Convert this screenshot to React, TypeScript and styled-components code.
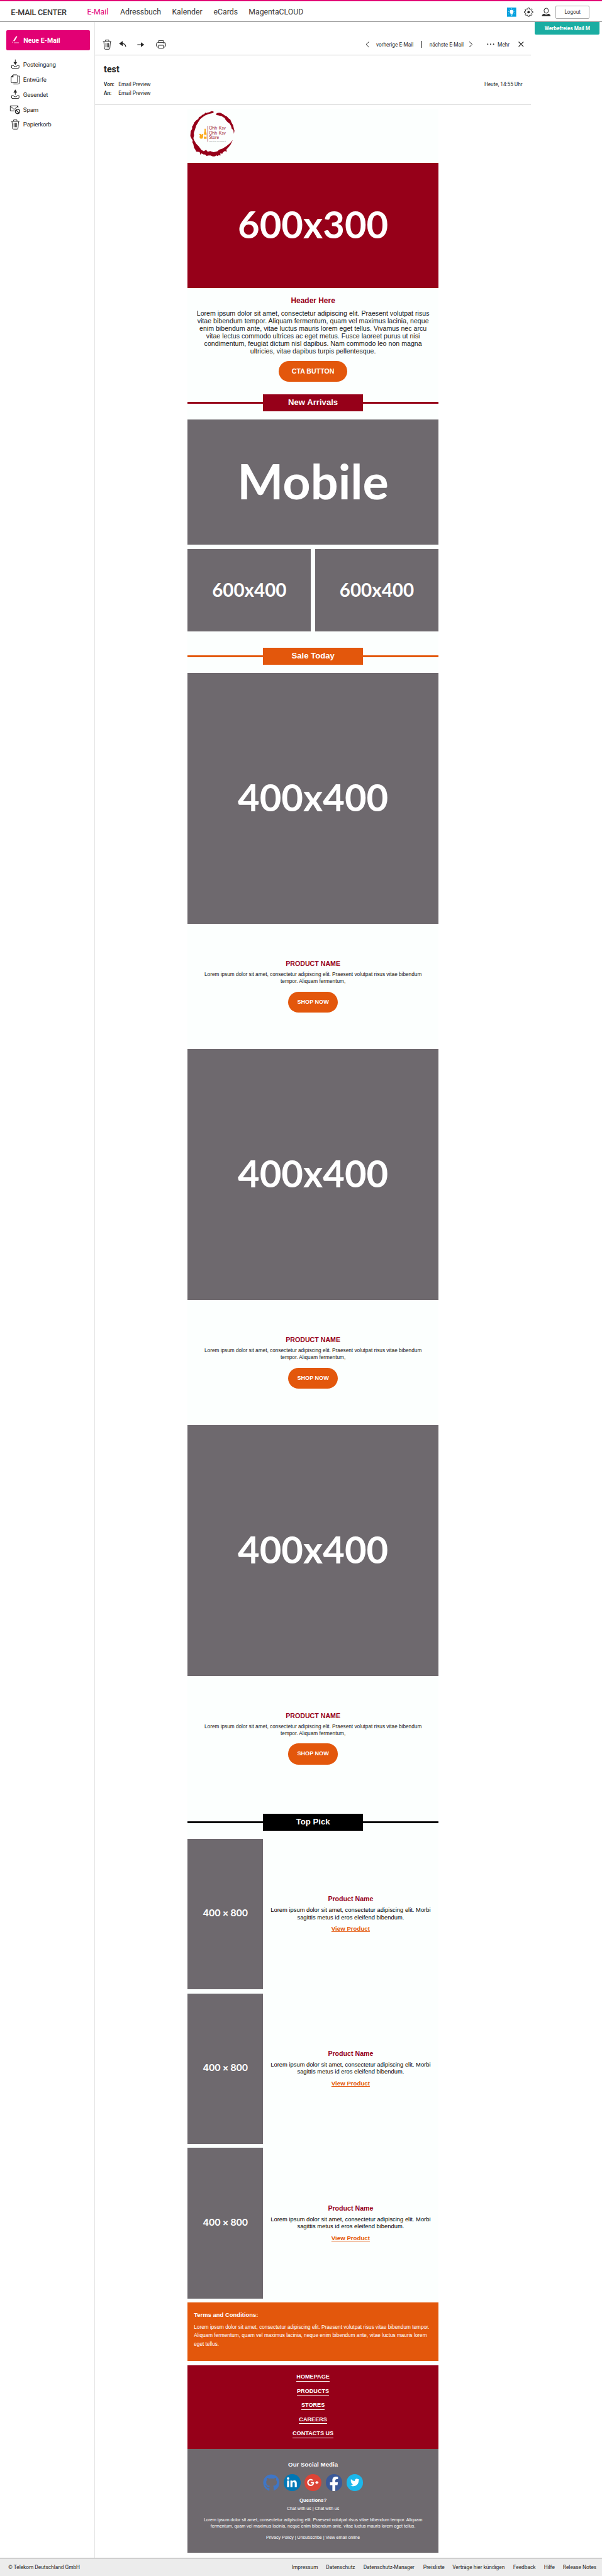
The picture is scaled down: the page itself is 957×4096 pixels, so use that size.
import React from "react";
import styled, { createGlobalStyle } from "styled-components";
import { FaGithub, FaLinkedinIn, FaGooglePlusG, FaFacebookF, FaTwitter } from "react-icons/fa";

/* 1rem = 10 design pixels */
const GlobalStyle = createGlobalStyle`
  *, *::before, *::after { box-sizing: border-box; }
  html { font-size: 6.644px; }
  body { margin: 0; background: #fff; overflow: hidden; }
  svg { display: block; }
`;

const ui = `"Roboto", "Liberation Sans", sans-serif`;
const arial = `"Liberation Sans", Arial, sans-serif`;
const magenta = "#e20074";
const crimson = "#960019";
const orange = "#e3570c";
const slate = "#6e696e";

const Page = styled.div`
  width: 100%;
  height: 616.5rem;
  display: flex;
  flex-direction: column;
  background: #fff;
  color: #262626;
  font-family: ${ui};
  white-space: nowrap;
`;

/* ---------- top bar ---------- */
const TopBar = styled.header`
  height: 5.2rem;
  flex: none;
  display: flex;
  align-items: center;
  border-top: 0.4rem solid ${magenta};
  border-bottom: 0.1rem solid #8c8c8c;
  padding: 0.6rem 3rem 0 2.6rem;
`;
const Brand = styled.div`
  width: 18.25rem;
  font-size: 1.9rem;
  line-height: 2.4rem;
  font-weight: 500;
  letter-spacing: -0.034rem;
  color: #383838;
`;
const Nav = styled.nav`
  display: flex;
  flex: 1;
`;
const NavItem = styled.a<{ $w: number; $active?: boolean }>`
  width: ${(p) => p.$w}rem;
  font-size: 1.85rem;
  line-height: 2.4rem;
  color: ${(p) => (p.$active ? magenta : "#383838")};
`;
const TopIcons = styled.div`
  display: flex;
  align-items: center;
  gap: 2rem;
  margin-right: 1.1rem;
`;
const Logout = styled.button`
  width: 8.1rem;
  height: 3.2rem;
  padding: 0;
  border: 0.1rem solid #a8a8a8;
  border-radius: 0.3rem;
  background: #fff;
  color: #383838;
  font: 400 1.23rem/1.6rem ${ui};
`;

/* ---------- body ---------- */
const Body = styled.div`
  flex: 1;
  min-height: 0;
  display: flex;
`;
const Sidebar = styled.aside`
  width: 22.8rem;
  flex: none;
  border-right: 0.1rem solid #e4e4e4;
  padding: 2rem 1.2rem 0 1.5rem;
`;
const Compose = styled.button`
  width: 20rem;
  height: 4.8rem;
  border: 0;
  border-radius: 0.3rem;
  padding: 0 0 0 1.4rem;
  display: flex;
  align-items: center;
  gap: 1rem;
  background: ${magenta};
  color: #fff;
  font: 700 1.6rem/2rem ${ui};
  margin-bottom: 1.6rem;

  span { padding-top: 0.25rem; }
  svg { margin-bottom: 0.3rem; }
`;
const Folder = styled.a`
  height: 3.6rem;
  display: flex;
  align-items: center;
  padding-left: 1rem;
  gap: 0.85rem;
  font-size: 1.45rem;
  letter-spacing: -0.025rem;
`;

const Reader = styled.main`
  width: 104.2rem;
  flex: none;
`;
const Toolbar = styled.div`
  height: 8rem;
  border-bottom: 0.1rem solid #cccccc;
  display: flex;
  align-items: center;
  padding: 3rem 1.75rem 0 1.7rem;
  font-size: 1.25rem;
  line-height: 1.6rem;
`;
const Tools = styled.div`
  display: flex;
  align-items: center;
  flex: 1;
`;
const Tool = styled.span<{ $w: number }>`
  width: ${(p) => p.$w}rem;
`;
const Pager = styled.div`
  display: flex;
  align-items: center;
`;
const PagerText = styled.span<{ $w: number }>`
  width: ${(p) => p.$w}rem;
  padding-top: 0.1rem;
`;
const Bar = styled.span`
  width: 0.1rem;
  height: 1.7rem;
  background: #262626;
  margin-right: 1.8rem;
`;
const Subject = styled.section`
  height: 12rem;
  border-bottom: 0.1rem solid #d9d9d9;
  padding: 2.35rem 2rem 0 2.05rem;
`;
const Title = styled.h1`
  margin: 0 0 1.35rem;
  font-size: 2.15rem;
  line-height: 2.4rem;
  font-weight: 700;
`;
const Meta = styled.div`
  display: flex;
  font-size: 1.24rem;
  line-height: 2rem;

  b { width: 3.5rem; font-weight: 600; }
  span { flex: 1; }
`;
const Promo = styled.aside`
  flex: 1;
  padding-left: 1rem;
`;
const PromoButton = styled.a`
  display: block;
  width: 15.5rem;
  height: 3.1rem;
  border-radius: 0 0 0.3rem 0.3rem;
  background: #1bada2;
  color: #fff;
  text-align: center;
  font-weight: 700;
  font-size: 1.245rem;
  line-height: 3.2rem;
`;

/* ---------- e-mail ---------- */
const Email = styled.article`
  width: 60rem;
  margin: 0.8rem auto 0;
  background: #fcfffe;
  font-family: ${arial};
  color: #202020;
  text-align: center;
`;
const Placeholder = styled.div<{ $h: number; $size: number; $w?: number; $bg?: string }>`
  width: ${(p) => p.$w ?? 60}rem;
  height: ${(p) => p.$h}rem;
  background: ${(p) => p.$bg ?? slate};
  display: flex;
  align-items: center;
  justify-content: center;
  color: #fff;
  font: 700 ${(p) => p.$size}rem/1.2 "Lato", sans-serif;
  padding-bottom: ${(p) => p.$size * 0.06}rem;
`;
const TallPlaceholder = styled(Placeholder)`
  font: 600 ${(p) => p.$size}rem/1.2 "Inter", sans-serif;
  letter-spacing: -0.08rem;
  padding-bottom: 0;
`;
const Intro = styled.section`
  padding: 2.03rem 0 3rem;
  display: flex;
  flex-direction: column;
  align-items: center;
`;
const IntroTitle = styled.h2`
  margin: 0 0 1.1rem;
  font-size: 1.8rem;
  line-height: 2.1rem;
  color: ${crimson};
`;
const IntroText = styled.p`
  margin: 0 0 1.37rem;
  font-size: 1.6rem;
  line-height: 1.8rem;
`;
const Pill = styled.a<{ $w: number; $size: number }>`
  width: ${(p) => p.$w}rem;
  height: 5rem;
  border-radius: 2.5rem;
  background: ${orange};
  color: #fff;
  font-weight: 700;
  font-size: ${(p) => p.$size}rem;
  line-height: 5rem;
  text-align: center;
`;
const Divider = styled.div<{ $color: string }>`
  display: flex;
  align-items: center;
  margin-bottom: 2rem;
  color: ${(p) => p.$color};

  &::before, &::after {
    content: "";
    flex: 1;
    height: 0.5rem;
    background: currentColor;
  }
`;
const DividerLabel = styled.h3<{ $color: string }>`
  width: 24rem;
  margin: 0;
  background: ${(p) => p.$color};
  color: #fff;
  font-size: 1.98rem;
  line-height: 4rem;
`;
const Pair = styled.div`
  display: flex;
  justify-content: space-between;
  margin: 1rem 0 4rem;
`;
const ProductList = styled.div`
  padding-bottom: 3rem;
`;
const Product = styled.section`
  height: 30rem;
  padding-top: 8.75rem;
  display: flex;
  flex-direction: column;
  align-items: center;
`;
const ProductName = styled.h4`
  margin: 0 0 0.95rem;
  font-size: 1.6rem;
  line-height: 1.8rem;
  color: ${crimson};
`;
const ProductText = styled.p`
  margin: 0 0 1.53rem;
  font-size: 1.243rem;
  line-height: 1.6rem;
`;
const Pick = styled.section`
  display: flex;
  margin-bottom: 1rem;
`;
const PickInfo = styled.div`
  flex: 1;
  display: flex;
  flex-direction: column;
  align-items: center;
  justify-content: center;
`;
const PickText = styled.p`
  margin: 0 0 1rem;
  color: #000;
  font-size: 1.413rem;
  line-height: 1.7rem;
`;
const PickLink = styled.a`
  color: ${orange};
  font-weight: 700;
  font-size: 1.457rem;
  line-height: 1.7rem;
  text-decoration: underline;
`;
const Terms = styled.section`
  height: 14rem;
  margin-bottom: 1rem;
  padding: 2.2rem 1.5rem 0;
  background: ${orange};
  color: #fff;
  text-align: left;
  font-size: 1.241rem;
  line-height: 2rem;

  h5 { margin: 0 0 1.15rem; font-size: 1.425rem; line-height: 1.6rem; }
  p { margin: 0; }
`;
const Links = styled.nav`
  height: 20rem;
  padding-top: 2rem;
  background: ${crimson};
  display: flex;
  flex-direction: column;
  align-items: center;
  gap: 1.5rem;
`;
const LinkItem = styled.a`
  height: 1.9rem;
  border-bottom: 0.2rem solid #fff;
  color: #fff;
  font-weight: 700;
  font-size: 1.375rem;
  line-height: 1.6rem;
`;
const Social = styled.section`
  height: 24.8rem;
  padding-top: 2.86rem;
  background: ${slate};
  color: #fff;
  font-size: 1.064rem;
  line-height: 1.4rem;

  h5 { margin: 0 0 1.44rem; font-size: 1.47rem; line-height: 1.8rem; }
  h6 { margin: 0 0 0.47rem; font-size: 1.19rem; line-height: 1.4rem; }
  p { margin: 0 0 1.4rem; }
`;
const SocialRow = styled.div`
  display: flex;
  justify-content: center;
  gap: 1rem;
  margin-bottom: 1.58rem;
`;
const Disc = styled.a<{ $bg: string; $fg?: string; $size: number; $drop?: number }>`
  width: 4rem;
  height: 4rem;
  border-radius: 50%;
  overflow: hidden;
  background: ${(p) => p.$bg};
  color: ${(p) => p.$fg ?? "#fff"};
  display: flex;
  align-items: center;
  justify-content: center;
  padding-top: ${(p) => p.$drop ?? 0}rem;

  svg { width: ${(p) => p.$size}rem; height: ${(p) => p.$size}rem; flex: none; }
`;

/* ---------- footer ---------- */
const Footer = styled.footer`
  height: 4.3rem;
  flex: none;
  display: flex;
  align-items: center;
  border-top: 0.1rem solid #8c8c8c;
  background: #ececec;
  padding-left: 2rem;
  font-size: 1.25rem;
  line-height: 1.6rem;
`;
const Owner = styled.span`
  width: 67.8rem;
`;
const FooterLink = styled.a<{ $w: number }>`
  width: ${(p) => p.$w}rem;
`;

/* ---------- icons ---------- */
const Svg = styled.svg<{ $w: number; $h: number }>`
  width: ${(p) => p.$w / 10}rem;
  height: ${(p) => p.$h / 10}rem;
  flex: none;
  overflow: visible;
  fill: none;
  stroke: currentColor;
  stroke-width: 1.5;
`;
type IconProps = { w: number; h: number; children: React.ReactNode };
const Icon = ({ w, h, children }: IconProps) => (
  <Svg $w={w} $h={h} viewBox={`0 0 ${w} ${h}`}>{children}</Svg>
);

const Trash = () => (
  <Icon w={22} h={24}>
    <path d="M1 4.5H21M7 4V1H15V4M3.2 5L4.5 21Q4.7 23 6.5 23H15.5Q17.3 23 17.5 21L18.8 5M8 8V18.5M11 8V18.5M14 8V18.5" />
  </Icon>
);
const Tray = ({ up }: { up?: boolean }) => (
  <Icon w={22} h={24}>
    <path d="M2 15.2H6.5Q7.2 18 11 18T15.5 15.2H20V19.5Q20 22 17.5 22H4.5Q2 22 2 19.5Z" />
    <path d={up ? "M11 13V7" : "M11 1V8"} />
    <path d={up ? "M6.5 8L11 0.5L15.5 8Z" : "M6.5 7L11 14L15.5 7Z"} fill="currentColor" stroke="none" />
  </Icon>
);
const Drafts = () => (
  <Icon w={22} h={24}>
    <path d="M6 1.5H14Q16.5 1.5 16.5 4V18Q16.5 20.5 14 20.5H3.5Q1 20.5 1 18V6.5Z" />
    <path d="M1 7L6.5 1V7Z" fill="currentColor" stroke="none" />
    <path d="M18.5 4.5H21V20Q21 23.5 17.5 23.5H6.5" />
  </Icon>
);
const Spam = () => (
  <Icon w={22} h={24}>
    <path d="M9.5 15.5H-1V3.5H17.5V9M-0.8 4L8.2 12L17.3 4" />
    <circle cx="16.5" cy="17" r="5.2" strokeWidth="2" />
    <path d="M13 13.5L20 20.5" strokeWidth="2" />
  </Icon>
);
const Pen = () => (
  <Icon w={17} h={18}>
    <path d="M11.5 1L4.5 12.5" strokeWidth="3" />
    <path d="M3 13.5L1 16.5M5 16.5H16.5" strokeWidth="1.2" />
  </Icon>
);
const Reply = () => (
  <Icon w={18} h={16}>
    <path d="M0.5 6.5L9 0.5V12.5Z" fill="currentColor" stroke="none" />
    <path d="M8 6.5Q15.5 6.5 16.5 14" strokeWidth="1.8" />
  </Icon>
);
const Forward = () => (
  <Icon w={18} h={12}>
    <path d="M0.5 6H10" />
    <path d="M9 0.5L17 6L9 11.5Z" fill="currentColor" stroke="none" />
  </Icon>
);
const Printer = () => (
  <Icon w={24} h={20}>
    <path d="M6 5V1H18V5M5.5 16.5H4L1 14V8.5Q1 5.5 4 5.5H20Q23 5.5 23 8.5V14L20 16.5H18.5M6.2 12H17.8V19.3H6.2Z" />
    <path d="M18.5 8.5H20" />
  </Icon>
);
const Bulb = () => (
  <Icon w={22} h={22}>
    <rect width="22" height="22" fill="#00a0de" stroke="none" />
    <path d="M11 5.2A4.7 4.7 0 0 1 13.8 13.7V15.5H8.2V13.7A4.7 4.7 0 0 1 11 5.2Z" fill="#fff" stroke="none" />
    <path d="M8.6 17H13.4M9.5 19H12.5M11 1.8V3.2M5.5 3.8L6.5 5M16.5 3.8L15.5 5M2.8 9.5H4.3M19.2 9.5H17.7M3.5 15.5L4.8 14.5M18.5 15.5L17.2 14.5" stroke="#fff" strokeWidth="1.1" />
  </Icon>
);
const Gear = () => (
  <Icon w={22} h={22}>
    <path d="M9.3 1H12.7L13.3 3.7L15 4.4L17.4 2.9L19.4 5L17.9 7.4L18.5 9.1L21.2 9.6V12.5L18.5 13.1L17.8 14.8L19.3 17.1L17.2 19.2L14.9 17.8L13.2 18.5L12.6 21.2H9.4L8.8 18.5L7.1 17.8L4.8 19.2L2.7 17.1L4.2 14.8L3.5 13.1L0.8 12.5V9.6L3.5 9.1L4.1 7.4L2.6 5L4.6 2.9L7 4.4L8.7 3.7Z" />
    <circle cx="11" cy="11" r="3" fill="currentColor" stroke="none" />
  </Icon>
);
const Person = () => (
  <Icon w={22} h={22}>
    <ellipse cx="11" cy="7.5" rx="5.2" ry="6" />
    <path d="M0.5 20.5Q1.5 15.5 6.5 15.2Q8.5 17 11 17T15.5 15.2Q20.5 15.5 21.5 20.5Z" fill="currentColor" stroke="none" />
  </Icon>
);
const Chevron = ({ right }: { right?: boolean }) => (
  <Icon w={10} h={14}>
    <path d={right ? "M1.5 0.5L8.5 7L1.5 13.5" : "M8.5 0.5L1.5 7L8.5 13.5"} />
  </Icon>
);
const Dots = () => (
  <Icon w={18} h={4}>
    <g fill="currentColor" stroke="none">
      <circle cx="2" cy="2" r="1.5" />
      <circle cx="9" cy="2" r="1.5" />
      <circle cx="16" cy="2" r="1.5" />
    </g>
  </Icon>
);
const Close = () => (
  <Icon w={13} h={13}>
    <path d="M0.8 0.8L12.2 12.2M12.2 0.8L0.8 12.2" strokeWidth="1.8" />
  </Icon>
);

const LogoSvg = styled.svg`
  width: 13rem;
  height: 13rem;
  font-family: "Lato", sans-serif;
`;
const StoreLogo = () => (
  <LogoSvg viewBox="12.6 15 390 390">
    <g fill={crimson}>
      <path d="M202 38L196 33L184 32L170 40L156 42L150 46L142 42L132 53L120 58L106 70L95 75L90 88L76 97L62 112L52 135L46 142L46 160L36 175L33 210L42 230L50 242L48 256L55 270L60 295L70 310L75 322L100 326L106 346L113 335L126 342L140 344L150 354L164 350L178 350L195 357L212 356L218 349L230 355L236 348L250 350L248 335L262 338L268 328L282 318L294 324L293 306L308 290L322 272L338 238L318 262L290 285L262 302L240 308L228 320L200 327L176 319L158 323L146 310L130 320L112 310L95 286L75 266L60 240L55 226L60 205L58 190L66 165L76 135L92 108L104 90L120 76L138 64L165 52L196 46Z" />
      <path d="M217 52Q226 40 250 44Q268 50 280 62L296 70L308 84L320 92L330 115L340 132L346 158L350 172L346 195L342 165L331 160L325 138L316 122L300 110L286 94L280 82L258 68L236 62L222 60Z" />
      <rect x="157" y="137" width="4.5" height="115" fill="#a8394b" />
    </g>
    <g fill="#fba91b">
      <path d="M135 158H144V178Q150 186 150 194V231H131V194Q131 186 135 178Z" />
      <path d="M97 196Q106 192 114 201Q119 194 126 197Q129 203 124 208Q128 215 122 226Q116 232 111 229Q104 231 101 225Q96 215 103 207Q98 203 97 196Z" />
    </g>
    <path d="M132 202Q136 198 141 201T149 203V215Q143 218 132 214Z" fill="#fff" />
    <g fill="#a02236" fontSize="32">
      <text x="167" y="166" textLength="121" lengthAdjust="spacingAndGlyphs">Ohh-Kay</text>
      <text x="167" y="198" textLength="121" lengthAdjust="spacingAndGlyphs">Ohh-Kay</text>
      <text x="167" y="230" textLength="72" lengthAdjust="spacingAndGlyphs">Store</text>
    </g>
    <text x="167" y="251" fontSize="11.5" fill="#555" textLength="121" lengthAdjust="spacingAndGlyphs">Fake it till you make it</text>
  </LogoSvg>
);

const products = [1, 2, 3];

export default function App() {
  return (
    <Page>
      <GlobalStyle />
      <TopBar>
        <Brand>E-MAIL CENTER</Brand>
        <Nav>
          <NavItem $w={7.9} $active>E-Mail</NavItem>
          <NavItem $w={12.4}>Adressbuch</NavItem>
          <NavItem $w={9.95}>Kalender</NavItem>
          <NavItem $w={8.4}>eCards</NavItem>
          <NavItem $w={14}>MagentaCLOUD</NavItem>
        </Nav>
        <TopIcons>
          <Bulb />
          <Gear />
          <Person />
        </TopIcons>
        <Logout>Logout</Logout>
      </TopBar>

      <Body>
        <Sidebar>
          <Compose><Pen /><span>Neue E-Mail</span></Compose>
          <Folder><Tray />Posteingang</Folder>
          <Folder><Drafts />Entwürfe</Folder>
          <Folder><Tray up />Gesendet</Folder>
          <Folder><Spam />Spam</Folder>
          <Folder><Trash />Papierkorb</Folder>
        </Sidebar>

        <Reader>
          <Toolbar>
            <Tools>
              <Tool $w={4}><Trash /></Tool>
              <Tool $w={4.3}><Reply /></Tool>
              <Tool $w={4.5}><Forward /></Tool>
              <Tool $w={2.4}><Printer /></Tool>
            </Tools>
            <Pager>
              <Tool $w={2.6}><Chevron /></Tool>
              <PagerText $w={10.85}>vorherige E-Mail</PagerText>
              <Bar />
              <PagerText $w={9.4}>nächste E-Mail</PagerText>
              <Tool $w={4.3}><Chevron right /></Tool>
              <Tool $w={2.6}><Dots /></Tool>
              <PagerText $w={4.9}>Mehr</PagerText>
              <Close />
            </Pager>
          </Toolbar>
          <Subject>
            <Title>test</Title>
            <Meta><b>Von:</b><span>Email Preview</span><time>Heute, 14:55 Uhr</time></Meta>
            <Meta><b>An:</b><span>Email Preview</span></Meta>
          </Subject>

          <Email>
            <StoreLogo />
            <Placeholder $h={30} $size={9} $bg={crimson}>600x300</Placeholder>
            <Intro>
              <IntroTitle>Header Here</IntroTitle>
              <IntroText>
                Lorem ipsum dolor sit amet, consectetur adipiscing elit. Praesent volutpat risus<br />
                vitae bibendum tempor. Aliquam fermentum, quam vel maximus lacinia, neque<br />
                enim bibendum ante, vitae luctus mauris lorem eget tellus. Vivamus nec arcu<br />
                vitae lectus commodo ultrices ac eget metus. Fusce laoreet purus ut nisi<br />
                condimentum, feugiat dictum nisl dapibus. Nam commodo leo non magna<br />
                ultricies, vitae dapibus turpis pellentesque.
              </IntroText>
              <Pill $w={16.5} $size={1.6}>CTA BUTTON</Pill>
            </Intro>

            <Divider $color={crimson}><DividerLabel $color={crimson}>New Arrivals</DividerLabel></Divider>
            <Placeholder $h={30} $size={11.65}>Mobile</Placeholder>
            <Pair>
              <Placeholder $w={29.5} $h={19.7} $size={4.45}>600x400</Placeholder>
              <Placeholder $w={29.5} $h={19.7} $size={4.45}>600x400</Placeholder>
            </Pair>

            <Divider $color={orange}><DividerLabel $color={orange}>Sale Today</DividerLabel></Divider>
            <ProductList>
              {products.map((n) => (
                <React.Fragment key={n}>
                  <Placeholder $h={60} $size={9}>400x400</Placeholder>
                  <Product>
                    <ProductName>PRODUCT NAME</ProductName>
                    <ProductText>
                      Lorem ipsum dolor sit amet, consectetur adipiscing elit. Praesent volutpat risus vitae bibendum<br />
                      tempor. Aliquam fermentum,
                    </ProductText>
                    <Pill $w={12} $size={1.37}>SHOP NOW</Pill>
                  </Product>
                </React.Fragment>
              ))}
            </ProductList>

            <Divider $color="#000"><DividerLabel $color="#000">Top Pick</DividerLabel></Divider>
            {products.map((n) => (
              <Pick key={n}>
                <TallPlaceholder $w={18} $h={36} $size={2.25}>400 × 800</TallPlaceholder>
                <PickInfo>
                  <ProductName>Product Name</ProductName>
                  <PickText>
                    Lorem ipsum dolor sit amet, consectetur adipiscing elit. Morbi<br />
                    sagittis metus id eros eleifend bibendum.
                  </PickText>
                  <PickLink>View Product</PickLink>
                </PickInfo>
              </Pick>
            ))}

            <Terms>
              <h5>Terms and Conditions:</h5>
              <p>
                Lorem ipsum dolor sit amet, consectetur adipiscing elit. Praesent volutpat risus vitae bibendum tempor.<br />
                Aliquam fermentum, quam vel maximus lacinia, neque enim bibendum ante, vitae luctus mauris lorem<br />
                eget tellus.
              </p>
            </Terms>
            <Links>
              <LinkItem>HOMEPAGE</LinkItem>
              <LinkItem>PRODUCTS</LinkItem>
              <LinkItem>STORES</LinkItem>
              <LinkItem>CAREERS</LinkItem>
              <LinkItem>CONTACTS US</LinkItem>
            </Links>
            <Social>
              <h5>Our Social Media</h5>
              <SocialRow>
                <Disc $bg="transparent" $fg="#3f76c6" $size={4.1}><FaGithub /></Disc>
                <Disc $bg="#0077b5" $size={2.7}><FaLinkedinIn /></Disc>
                <Disc $bg="#dc4437" $size={2.8}><FaGooglePlusG /></Disc>
                <Disc $bg="#3b5998" $size={3.6} $drop={0.8}><FaFacebookF /></Disc>
                <Disc $bg="#1cb7eb" $size={2.2}><FaTwitter /></Disc>
              </SocialRow>
              <h6>Questions?</h6>
              <p>Chat with us | Chat with us</p>
              <p>
                Lorem ipsum dolor sit amet, consectetur adipiscing elit. Praesent volutpat risus vitae bibendum tempor. Aliquam<br />
                fermentum, quam vel maximus lacinia, neque enim bibendum ante, vitae luctus mauris lorem eget tellus.
              </p>
              <p>Privacy Policy | Unsubscribe | View email online</p>
            </Social>
          </Email>
        </Reader>

        <Promo>
          <PromoButton>Werbefreies Mail M</PromoButton>
        </Promo>
      </Body>

      <Footer>
        <Owner>© Telekom Deutschland GmbH</Owner>
        <FooterLink $w={8.2}>Impressum</FooterLink>
        <FooterLink $w={8.95}>Datenschutz</FooterLink>
        <FooterLink $w={14.3}>Datenschutz-Manager</FooterLink>
        <FooterLink $w={7}>Preisliste</FooterLink>
        <FooterLink $w={14.55}>Verträge hier kündigen</FooterLink>
        <FooterLink $w={7.35}>Feedback</FooterLink>
        <FooterLink $w={4.55}>Hilfe</FooterLink>
        <FooterLink $w={8}>Release Notes</FooterLink>
      </Footer>
    </Page>
  );
}
